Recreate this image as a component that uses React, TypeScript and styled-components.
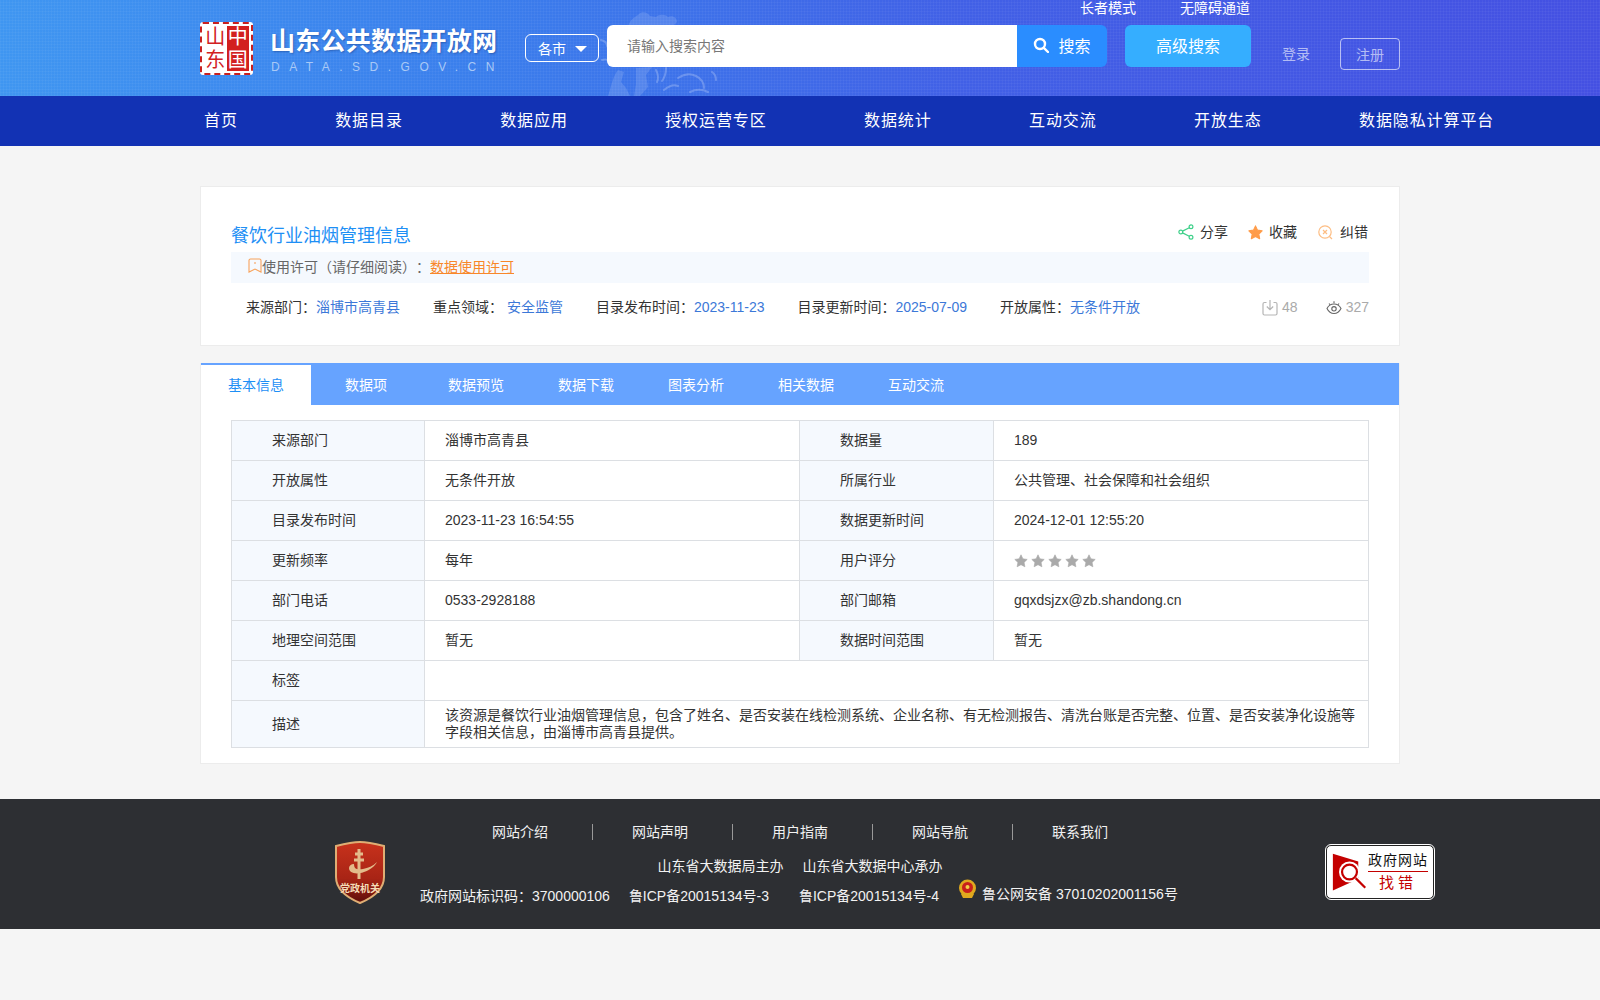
import styled, { createGlobalStyle } from "styled-components";

const GlobalStyle = createGlobalStyle`
    * { box-sizing: border-box; }
    html, body { margin: 0; padding: 0; }
    body {
        background: #f5f5f5;
        color: #333;
        font-family: "Liberation Sans", "Noto Sans CJK SC", sans-serif;
        font-size: 14px;
        min-height: 1000px;
        text-spacing-trim: space-all;
    }
    a { color: inherit; text-decoration: none; }
`;

const Header = styled.header`
    position: relative;
    height: 96px;
    overflow: hidden;
    background-color: #3d6fe8;
    background-image:
        repeating-linear-gradient(0deg, rgba(255,255,255,0.035) 0 1px, transparent 1px 3px),
        repeating-linear-gradient(90deg, rgba(255,255,255,0.035) 0 1px, transparent 1px 3px),
        linear-gradient(90deg, #3f96f1 0%, #3a7eec 30%, #4160e6 60%, #4450e2 100%);
`;

const MapArt = styled.svg`
    position: absolute;
    left: 600px;
    top: 0;
    width: 180px;
    height: 96px;
`;

const HeaderInner = styled.div`
    position: relative;
    width: 1200px;
    height: 96px;
    margin: 0 auto;
    display: flex;
    align-items: flex-start;
`;

const Brand = styled.div`
    width: 325px;
    padding-top: 22px;
    display: flex;
`;

const Seal = styled.div`
    width: 53px;
    height: 53px;
    padding: 2px;
    margin-right: 17px;
    display: grid;
    grid-template-columns: 1fr 1fr;
    grid-template-rows: 1fr 1fr;
    grid-auto-flow: column;
    background: #fff;
    border: 2px dashed #c9201f;
    border-radius: 3px;
`;

const SealChar = styled.span<{ $red?: boolean }>`
    display: flex;
    align-items: center;
    justify-content: center;
    font-size: 20px;
    line-height: 1;
    font-weight: 400;
    color: ${(p) => (p.$red ? "#fff" : "#d2201f")};
    background: ${(p) => (p.$red ? "#d2201f" : "#fff")};
`;

const BrandText = styled.div`
    display: flex;
    flex-direction: column;
    padding-top: 3px;
`;

const BrandTitle = styled.div`
    color: #fff;
    font-size: 25px;
    line-height: 32px;
    font-weight: 700;
    letter-spacing: 0.25px;
    white-space: nowrap;
    text-shadow: 1px 1px 2px rgba(20, 50, 120, 0.45);
`;

const BrandSub = styled.div`
    color: #a9c9f6;
    font-size: 12px;
    line-height: 16px;
    margin: 2px 0 0 1px;
    letter-spacing: 9.5px;
    white-space: nowrap;
`;

const HeaderRight = styled.div`
    flex: 1;
    display: flex;
    flex-direction: column;
`;

const TopLinks = styled.div`
    height: 25px;
    padding: 0 0 0 555px;
    display: flex;
    gap: 44px;
    color: #fff;
    line-height: 17px;
`;

const SearchRow = styled.div`
    display: flex;
    align-items: flex-start;
`;

const CitySelect = styled.div`
    width: 74px;
    height: 28px;
    margin: 9px 8px 0 0;
    padding-left: 12px;
    display: flex;
    align-items: center;
    gap: 9px;
    color: #fff;
    border: 1px solid #fff;
    border-radius: 6px;
`;

const Caret = styled.i`
    width: 0;
    height: 0;
    margin-top: 2px;
    border-left: 6px solid transparent;
    border-right: 6px solid transparent;
    border-top: 6px solid #fff;
`;

const SearchInput = styled.div`
    width: 410px;
    height: 42px;
    padding: 0 0 2px 20px;
    display: flex;
    align-items: center;
    color: #777;
    background: #fff;
    border-radius: 6px 0 0 6px;
`;

const SearchButton = styled.div`
    width: 90px;
    height: 42px;
    padding-bottom: 2px;
    display: flex;
    align-items: center;
    justify-content: center;
    gap: 9px;
    color: #fff;
    font-size: 16px;
    background: #2a8dff;
    border-radius: 0 6px 6px 0;
`;

const AdvancedButton = styled.div`
    width: 126px;
    height: 42px;
    margin-left: 18px;
    padding-bottom: 2px;
    display: flex;
    align-items: center;
    justify-content: center;
    color: #fff;
    font-size: 16px;
    background: #35aeff;
    border-radius: 6px;
`;

const Login = styled.a`
    margin: 21px 30px 0 31px;
    line-height: 17px;
    color: rgba(255, 255, 255, 0.62);
`;

const Register = styled.a`
    width: 60px;
    height: 32px;
    margin-top: 13px;
    display: flex;
    align-items: center;
    justify-content: center;
    color: rgba(255, 255, 255, 0.62);
    border: 1px solid rgba(255, 255, 255, 0.62);
    border-radius: 4px;
`;

const Nav = styled.nav`
    height: 50px;
    background: #1232b4;
`;

const NavList = styled.div`
    width: 1200px;
    height: 50px;
    margin: 0 auto;
    padding: 0 0 4px 4px;
    display: flex;
    align-items: center;
    gap: 97.4px;
`;

const NavItem = styled.a`
    color: #fff;
    font-size: 16px;
    letter-spacing: 0.9px;
    white-space: nowrap;
`;

const Main = styled.main`
    width: 1200px;
    margin: 40px auto 0;
`;

const SummaryCard = styled.section`
    height: 160px;
    padding: 0 30px;
    background: #fff;
    border: 1px solid #ececec;
`;

const TitleRow = styled.div`
    height: 65px;
    padding-top: 35px;
    display: flex;
    justify-content: space-between;
`;

const Title = styled.h1`
    margin: 0;
    color: #1e8ff5;
    font-size: 18px;
    line-height: 28px;
    font-weight: 400;
`;

const Actions = styled.div`
    display: flex;
    gap: 20px;
    line-height: 20px;
    height: 20px;
    margin-right: 1px;
`;

const Action = styled.a`
    display: flex;
    align-items: center;
    gap: 6px;
    color: #333;
`;

const LicenseBar = styled.div`
    height: 31px;
    padding: 0 0 3px 17px;
    display: flex;
    align-items: center;
    color: #666;
    background: #f5f9fe;
`;

const LicenseLink = styled.a`
    color: #f8872a;
    text-decoration: underline;
`;

const MetaRow = styled.div`
    margin-top: 14px;
    padding-left: 15px;
    display: flex;
    align-items: center;
    gap: 33px;
    line-height: 20px;
`;

const MetaItem = styled.span`
    color: #333;
    white-space: nowrap;
`;

const MetaValue = styled.span`
    color: #3c78d8;
`;

const Stats = styled.div`
    margin-left: auto;
    display: flex;
    gap: 28px;
    color: #aaa;
`;

const Stat = styled.span`
    display: flex;
    align-items: center;
    gap: 4px;
`;

const DetailCard = styled.section`
    margin-top: 17px;
    padding-bottom: 15px;
    background: #fff;
    border: 1px solid #ececec;
    border-top: 0;
`;

const Tabs = styled.div`
    height: 42px;
    display: flex;
    background: #66a3ff;
`;

const Tab = styled.a<{ $active?: boolean }>`
    width: 110px;
    padding-bottom: 2px;
    display: flex;
    align-items: center;
    justify-content: center;
    color: ${(p) => (p.$active ? "#1e8ff5" : "#fff")};
    background: ${(p) => (p.$active ? "#fff" : "transparent")};
    border-top: 2px solid #66a3ff;
`;

const InfoTable = styled.table`
    width: 1137px;
    margin: 15px 0 0 30px;
    table-layout: fixed;
    border-collapse: collapse;
`;

const Th = styled.th<{ $tall?: boolean }>`
    height: ${(p) => (p.$tall ? 47 : 40)}px;
    padding: 0 0 0 40px;
    text-align: left;
    font-weight: 400;
    line-height: 17px;
    color: #333;
    background: #f5f9fe;
    border: 1px solid #dcdfe3;
`;

const Td = styled.td`
    padding: 0 12px 0 20px;
    color: #333;
    background: #fff;
    border: 1px solid #dcdfe3;
    line-height: 17px;
`;

const Stars = styled.div`
    display: flex;
    gap: 3px;
`;

const Footer = styled.footer`
    height: 130px;
    margin-top: 35px;
    padding-left: 334px;
    display: flex;
    color: #f2f2f2;
    background: #2d2f33;
`;

const PartyBadge = styled.svg`
    width: 52px;
    height: 63px;
    margin-top: 42px;
`;

const FooterText = styled.div`
    width: 760px;
    margin-left: 34px;
    display: flex;
    flex-direction: column;
    align-items: center;
`;

const FooterLinks = styled.div`
    margin-top: 25px;
    height: 16px;
    display: flex;
    align-items: center;
`;

const FooterLink = styled.a`
    padding: 0 44px 0 39px;
    line-height: 16px;
    border-right: 1px solid #999;
    &:last-child { border-right: 0; padding-right: 0; }
    &:first-child { padding-left: 0; }
`;

const HostLine = styled.div`
    margin-top: 17px;
    display: flex;
    gap: 19px;
    line-height: 18px;
`;

const RecordLine = styled.div`
    width: 100%;
    margin-top: 12px;
    display: flex;
    align-items: flex-start;
    line-height: 18px;
    white-space: nowrap;
`;

const RecordItem = styled.span<{ $gap: number }>`
    margin-right: ${(p) => p.$gap}px;
`;

const PoliceItem = styled.span`
    display: flex;
    align-items: flex-start;
    gap: 5px;
    margin-top: -2px;
`;

const PoliceEmblem = styled.svg`
    margin-top: -6px;
`;

const ErrorBadge = styled.div`
    width: 108px;
    height: 54px;
    margin: 46px 0 0 146px;
    padding: 4px 5px;
    display: flex;
    background: #fff;
    border: 1px solid #222;
    outline: 1px solid #fff;
    border-radius: 5px;
`;

const ErrorText = styled.div`
    margin-left: 1px;
    flex: 1;
    display: flex;
    flex-direction: column;
    align-items: center;
`;

const ErrorTop = styled.div`
    width: 100%;
    color: #111;
    font-size: 14px;
    line-height: 21px;
    letter-spacing: 1px;
    white-space: nowrap;
    border-bottom: 1px solid #c40000;
    text-align: center;
`;

const ErrorBottom = styled.div`
    color: #c40000;
    font-size: 15px;
    line-height: 22px;
    letter-spacing: 4px;
`;

const navItems = ["首页", "数据目录", "数据应用", "授权运营专区", "数据统计", "互动交流", "开放生态", "数据隐私计算平台"];
const tabs = ["基本信息", "数据项", "数据预览", "数据下载", "图表分析", "相关数据", "互动交流"];
const footerLinks = ["网站介绍", "网站声明", "用户指南", "网站导航", "联系我们"];

const rows = [
    ["来源部门", "淄博市高青县", "数据量", "189"],
    ["开放属性", "无条件开放", "所属行业", "公共管理、社会保障和社会组织"],
    ["目录发布时间", "2023-11-23 16:54:55", "数据更新时间", "2024-12-01 12:55:20"],
    ["更新频率", "每年", "用户评分", ""],
    ["部门电话", "0533-2928188", "部门邮箱", "gqxdsjzx@zb.shandong.cn"],
    ["地理空间范围", "暂无", "数据时间范围", "暂无"],
];

const starPath = "M7 .8l1.9 4 4.3.6-3.1 3 .8 4.4L7 10.700l-3.900 2.100.8-4.400-3.100-3 4.300-.6z";

function App() {
    return (
        <>
            <GlobalStyle />
            <Header>
                <MapArt viewBox="0 0 180 96">
                    <g fill="#fff" opacity="0.13">
                        <path d="M30 22c3-5 8-6 10-9 4-2 8 0 10 3l6 1c3-3 9-3 12 0 5-2 9 1 9 5l-4 4H28z" />
                        <path d="M18 70l6 2-3 10 5 6 4 8H8c3-8 4-18 10-26z" />
                        <path d="M36 68l16-1-6 8 2 12-8 9h-6l2-12z" />
                    </g>
                    <g fill="none" stroke="#fff" strokeWidth="2" opacity="0.22" strokeLinecap="round">
                        <path d="M1 40c4 1 6 3 6 6M2 60c3-1 5-1 7 1" />
                        <path d="M56 70c2 4 3 8 1 12M66 68c0 5-1 9-4 13" />
                        <path d="M78 78c6-4 12-5 18-2 4 2 8 6 8 12" />
                        <path d="M64 90c6-5 10-6 14-4M90 92c6-3 12-3 18 0" />
                        <path d="M112 72c3 2 4 4 4 8" />
                    </g>
                </MapArt>
                <HeaderInner>
                    <Brand>
                        <Seal>
                            <SealChar>山</SealChar>
                            <SealChar>东</SealChar>
                            <SealChar $red>中</SealChar>
                            <SealChar $red>国</SealChar>
                        </Seal>
                        <BrandText>
                            <BrandTitle>山东公共数据开放网</BrandTitle>
                            <BrandSub>DATA.SD.GOV.CN</BrandSub>
                        </BrandText>
                    </Brand>
                    <HeaderRight>
                        <TopLinks>
                            <a>长者模式</a>
                            <a>无障碍通道</a>
                        </TopLinks>
                        <SearchRow>
                            <CitySelect>各市<Caret /></CitySelect>
                            <SearchInput>请输入搜索内容</SearchInput>
                            <SearchButton>
                                <svg width="16" height="16" viewBox="0 0 16 16" fill="none" stroke="#fff" strokeWidth="2.400">
                                    <circle cx="7" cy="7" r="5" />
                                    <path d="M10.800 10.800L15 15" strokeLinecap="round" />
                                </svg>
                                搜索
                            </SearchButton>
                            <AdvancedButton>高级搜索</AdvancedButton>
                            <Login>登录</Login>
                            <Register>注册</Register>
                        </SearchRow>
                    </HeaderRight>
                </HeaderInner>
            </Header>
            <Nav>
                <NavList>
                    {navItems.map((item) => (
                        <NavItem key={item}>{item}</NavItem>
                    ))}
                </NavList>
            </Nav>
            <Main>
                <SummaryCard>
                    <TitleRow>
                        <Title>餐饮行业油烟管理信息</Title>
                        <Actions>
                            <Action>
                                <svg width="16" height="16" viewBox="0 0 16 16" fill="none" stroke="#3fd08a" strokeWidth="1.200">
                                    <circle cx="2.800" cy="8" r="1.900" />
                                    <circle cx="13" cy="2.800" r="1.900" />
                                    <circle cx="13" cy="13.200" r="1.900" />
                                    <path d="M4.500 7.100l6.800-3.400M4.500 8.900l6.800 3.400" />
                                </svg>
                                分享
                            </Action>
                            <Action>
                                <svg width="15" height="15" viewBox="0 0 14 14" fill="#ff9c4a">
                                    <path d={starPath} stroke="#ff9c4a" strokeLinejoin="round" />
                                </svg>
                                收藏
                            </Action>
                            <Action>
                                <svg width="17" height="17" viewBox="0 0 17 17" fill="none" stroke="#fdbd83" strokeWidth="1.200">
                                    <circle cx="8" cy="8" r="6.200" />
                                    <path d="M6 6l4 4M10 6l-4 4M12.500 12.500l2.500 2.500" />
                                </svg>
                                <span>纠错</span>
                            </Action>
                        </Actions>
                    </TitleRow>
                    <LicenseBar>
                        <svg width="14" height="16" viewBox="0 0 14 16" fill="none" stroke="#f8a35c" strokeWidth="1.100">
                            <path d="M1 2.500A1.500 1.500 0 0 1 2.500 1h9A1.500 1.500 0 0 1 13 2.500V14l-6-3-6 3zM7 4v2" />
                        </svg>
                        使用许可（请仔细阅读）：<LicenseLink>数据使用许可</LicenseLink>
                    </LicenseBar>
                    <MetaRow>
                        <MetaItem>来源部门：<MetaValue>淄博市高青县</MetaValue></MetaItem>
                        <MetaItem>重点领域： <MetaValue>安全监管</MetaValue></MetaItem>
                        <MetaItem>目录发布时间：<MetaValue>2023-11-23</MetaValue></MetaItem>
                        <MetaItem>目录更新时间：<MetaValue>2025-07-09</MetaValue></MetaItem>
                        <MetaItem>开放属性：<MetaValue>无条件开放</MetaValue></MetaItem>
                        <Stats>
                            <Stat>
                                <svg width="16" height="17" viewBox="0 0 16 17" fill="none" stroke="#b5b5b5" strokeWidth="1.200">
                                    <path d="M4.500 3.500H2.500A1.500 1.500 0 0 0 1 5v9.500A1.500 1.500 0 0 0 2.500 16h11a1.500 1.500 0 0 0 1.500-1.500V5a1.500 1.500 0 0 0-1.500-1.500h-2M8 1v9.500M4.800 7.500L8 10.700l3.200-3.200" />
                                </svg>
                                48
                            </Stat>
                            <Stat>
                                <svg width="16" height="16" viewBox="0 0 16 16" fill="none" stroke="#666" strokeWidth="1.100">
                                    <path d="M1 9.500c1.500-3 4-4.500 7-4.500s5.500 1.500 7 4.500c-1.500 3-4 5-7 5s-5.500-2-7-5z" />
                                    <circle cx="8" cy="9.800" r="2.200" />
                                    <path d="M3 4.500l1.300 1.500M13 4.500l-1.300 1.500M8 2.300v2" />
                                </svg>
                                327
                            </Stat>
                        </Stats>
                    </MetaRow>
                </SummaryCard>
                <DetailCard>
                    <Tabs>
                        {tabs.map((tab, i) => (
                            <Tab key={tab} $active={i === 0}>{tab}</Tab>
                        ))}
                    </Tabs>
                    <InfoTable>
                        <colgroup>
                            <col width="193" />
                            <col width="375" />
                            <col width="194" />
                            <col width="375" />
                        </colgroup>
                        <tbody>
                            {rows.map((row) => (
                                <tr key={row[0]}>
                                    <Th>{row[0]}</Th>
                                    <Td>{row[1]}</Td>
                                    <Th>{row[2]}</Th>
                                    <Td>
                                        {row[2] === "用户评分" ? (
                                            <Stars>
                                                {[0, 1, 2, 3, 4].map((n) => (
                                                    <svg key={n} width="14" height="14" viewBox="0 0 14 14" fill="#aaa" stroke="#aaa" strokeWidth="0.600" strokeLinejoin="round">
                                                        <path d={starPath} />
                                                    </svg>
                                                ))}
                                            </Stars>
                                        ) : (
                                            row[3]
                                        )}
                                    </Td>
                                </tr>
                            ))}
                            <tr>
                                <Th>标签</Th>
                                <Td colSpan={3} />
                            </tr>
                            <tr>
                                <Th $tall>描述</Th>
                                <Td colSpan={3}>该资源是餐饮行业油烟管理信息，包含了姓名、是否安装在线检测系统、企业名称、有无检测报告、清洗台账是否完整、位置、是否安装净化设施等字段相关信息，由淄博市高青县提供。</Td>
                            </tr>
                        </tbody>
                    </InfoTable>
                </DetailCard>
            </Main>
            <Footer>
                <PartyBadge viewBox="0 0 52 63">
                    <defs>
                        <linearGradient id="shield" x1="0" y1="0" x2="0" y2="1">
                            <stop offset="0" stopColor="#c8321c" />
                            <stop offset="0.6" stopColor="#a82415" />
                            <stop offset="1" stopColor="#5c0e0a" />
                        </linearGradient>
                    </defs>
                    <path d="M2 5C10 3 18 1 26 1s16 2 24 4v31c0 13-12 21-24 26C14 57 2 49 2 36z" fill="url(#shield)" stroke="#dfae74" strokeWidth="2" />
                    <path d="M25 8v30M21 13h8M20 19h10" stroke="#e3bb8b" strokeWidth="3" fill="none" />
                    <path d="M15 27c0 5 7 7 15 4 6-2 11-6 13-10-4 4-9 6-14 7-6 1-9 0-9-5-3 0-5 2-5 4z" fill="#e3bb8b" />
                    <text x="26" y="51" textAnchor="middle" fontSize="10" fontWeight="700" fill="#f5dcb8">党政机关</text>
                </PartyBadge>
                <FooterText>
                    <FooterLinks>
                        {footerLinks.map((link) => (
                            <FooterLink key={link}>{link}</FooterLink>
                        ))}
                    </FooterLinks>
                    <HostLine>
                        <span>山东省大数据局主办</span>
                        <span>山东省大数据中心承办</span>
                    </HostLine>
                    <RecordLine>
                        <RecordItem $gap={19}>政府网站标识码：3700000106</RecordItem>
                        <RecordItem $gap={30}>鲁ICP备20015134号-3</RecordItem>
                        <RecordItem $gap={19}>鲁ICP备20015134号-4</RecordItem>
                        <PoliceItem>
                            <PoliceEmblem width="19" height="20" viewBox="0 0 19 20">
                                <circle cx="9.500" cy="9" r="8.500" fill="#e0a91e" />
                                <circle cx="9.500" cy="8.500" r="5.500" fill="#c8201c" />
                                <circle cx="9.500" cy="8" r="2" fill="#f3d04a" />
                                <path d="M3 15h13l-2 4H5z" fill="#e0a91e" />
                            </PoliceEmblem>
                            鲁公网安备 37010202001156号
                        </PoliceItem>
                    </RecordLine>
                </FooterText>
                <ErrorBadge>
                    <svg width="40" height="44" viewBox="0 0 40 44">
                        <path d="M1 1l29 9v20L1 43z" fill="#c40000" />
                        <circle cx="20" cy="22" r="12" fill="#fff" />
                        <circle cx="20" cy="22" r="8.500" fill="#fff" stroke="#c40000" strokeWidth="2.500" />
                        <path d="M27 29l11 11" stroke="#fff" strokeWidth="5" />
                        <path d="M27 29l11 11" stroke="#c40000" strokeWidth="2.500" />
                    </svg>
                    <ErrorText>
                        <ErrorTop>政府网站</ErrorTop>
                        <ErrorBottom>找错</ErrorBottom>
                    </ErrorText>
                </ErrorBadge>
            </Footer>
        </>
    );
}

export default App;
